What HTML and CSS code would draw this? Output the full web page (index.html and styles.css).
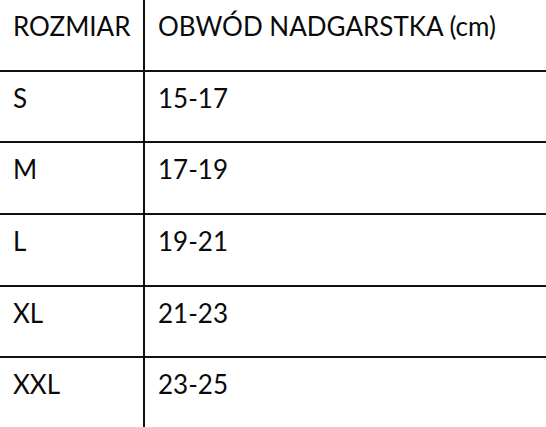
FILE: index.html
```html
<!DOCTYPE html>
<html lang="pl">
<head>
<meta charset="utf-8">
<title>Tabela rozmiarów</title>
<link rel="stylesheet" href="styles.css">
</head>
<body>
<div class="size-table">
  <div class="row head">
    <div class="cell size">ROZMIAR</div>
    <div class="cell range">OBWÓD NADGARSTKA (cm)</div>
  </div>
  <div class="row">
    <div class="cell size">S</div>
    <div class="cell range">15-17</div>
  </div>
  <div class="row">
    <div class="cell size">M</div>
    <div class="cell range">17-19</div>
  </div>
  <div class="row">
    <div class="cell size">L</div>
    <div class="cell range">19-21</div>
  </div>
  <div class="row">
    <div class="cell size">XL</div>
    <div class="cell range">21-23</div>
  </div>
  <div class="row last">
    <div class="cell size">XXL</div>
    <div class="cell range">23-25</div>
  </div>
</div>
</body>
</html>
```

FILE: styles.css
```css
html, body {
  margin: 0;
  padding: 0;
  background: #ffffff;
}

body {
  width: 546px;
  height: 427px;
  overflow: hidden;
  font-family: "Lato", "Open Sans", "Liberation Sans", sans-serif;
  font-size: 26px;
  color: #0a0a0a;
}

.size-table {
  display: flex;
  flex-direction: column;
}

.row {
  display: grid;
  grid-template-columns: 145px 1fr;
  box-sizing: border-box;
  height: 71.7px;
  border-bottom: 2px solid #111;
}

.row.head {
  height: 71.5px;
}

.row.last {
  border-bottom: none;
  height: 75px;
}

.cell {
  box-sizing: border-box;
  line-height: 32px;
  padding-top: 10px;
  white-space: nowrap;
}

.cell.size {
  padding-left: 13px;
  border-right: 2px solid #111;
}

.cell.range {
  padding-left: 13px;
}
```
